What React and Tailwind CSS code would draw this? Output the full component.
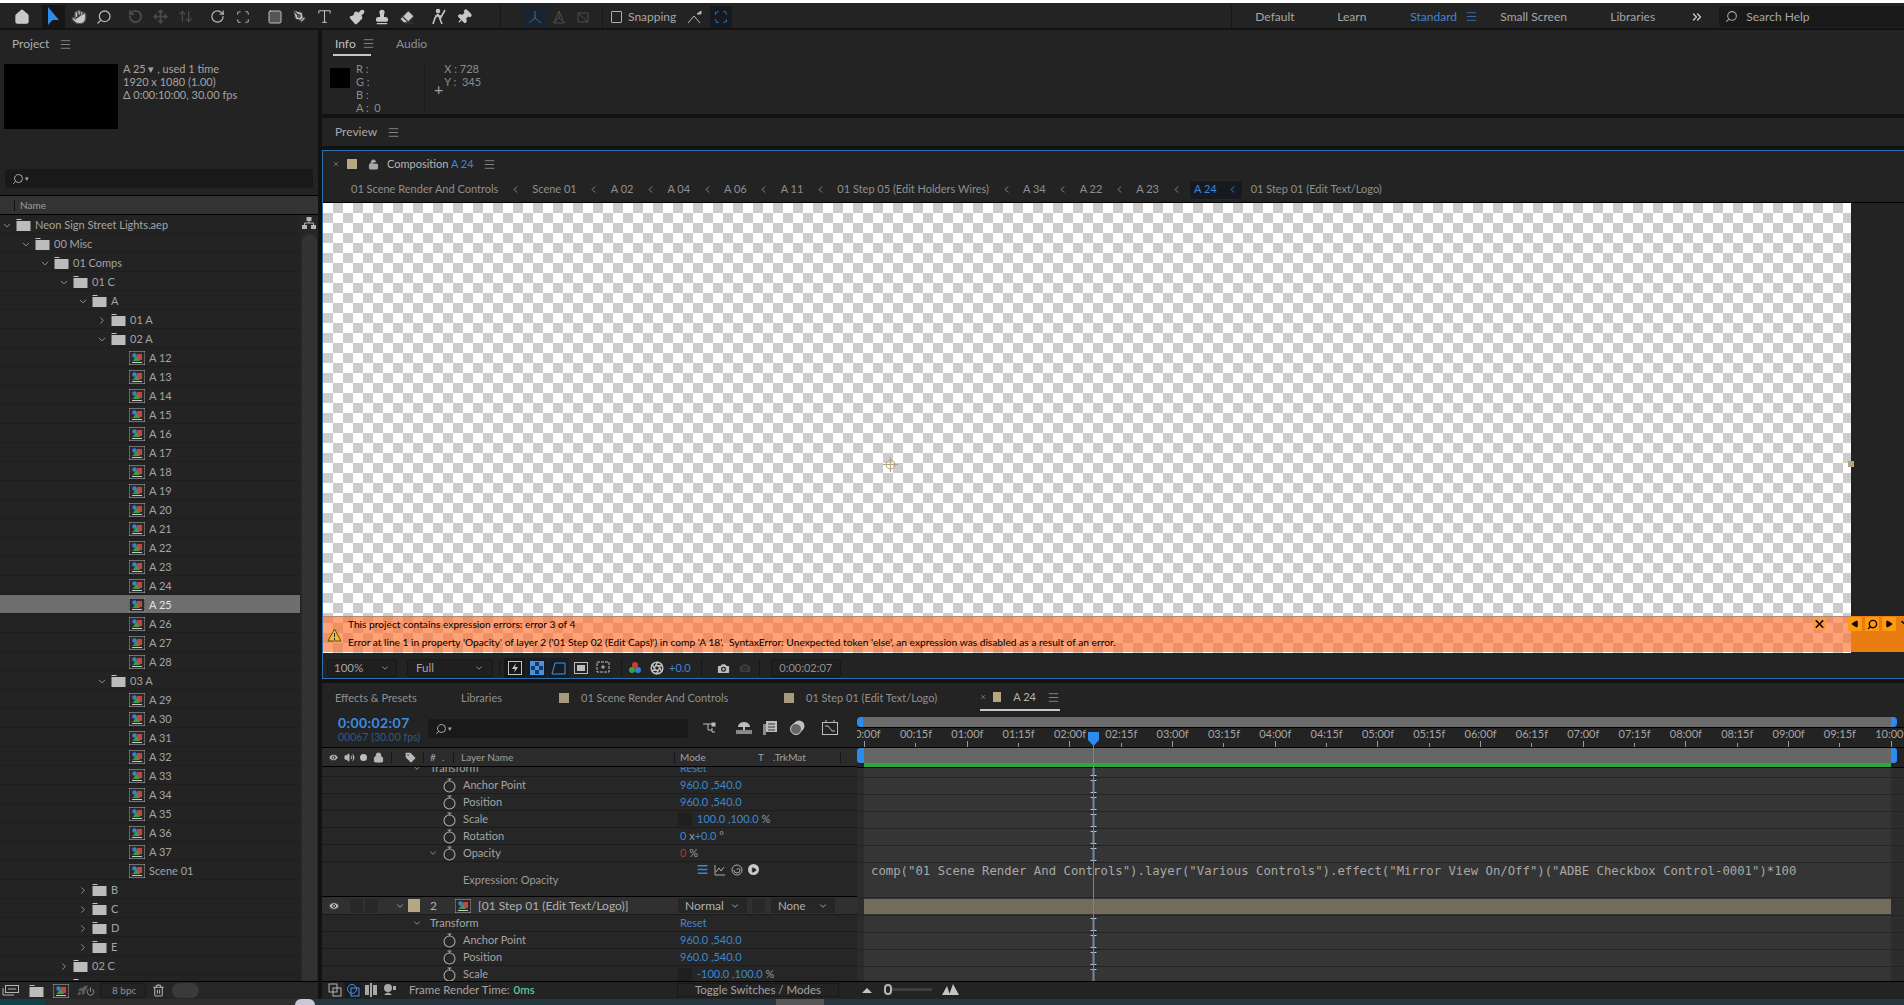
import React from 'react'
import {
  House, Hand, Search, RotateCcw, Scan, Square, PenTool, Type, Paintbrush, Stamp, Eraser, Pin, Move, ArrowUpDown, Rocket, Power,
  Menu, ChevronDown, ChevronRight, ChevronLeft, ChevronsRight, Camera, Aperture, Eye, Volume2, Lock, LockOpen, Tag, X, Play, Trash2,
} from 'lucide-react'

const Burger = ({ className = 'text-[#a8a8a8]' }) => <Menu size={13} strokeWidth={1.3} className={className} />

const Sep = ({ className = 'h-[20px]' }) => <div className={`w-px bg-[#161616] ${className}`} />

const Stopwatch = () => (
  <svg width="13" height="15" viewBox="0 0 13 15" fill="none" stroke="#a8a8a8" strokeWidth="1.1">
    <circle cx="6.5" cy="8.5" r="5.5" />
    <path d="M4.5 1h4M6.5 1v2" />
  </svg>
)

const FolderIcon = () => (
  <svg width="15" height="12" viewBox="0 0 15 12" className="shrink-0">
    <rect x="0.5" y="0" width="5" height="1" fill="#c4c4c4" />
    <rect x="0.5" y="2" width="14" height="10" fill="#bcbcbc" />
  </svg>
)

const CompIcon = () => (
  <svg width="16" height="14" viewBox="0 0 16 14" className="shrink-0">
    <rect x="0" y="0" width="16" height="14" fill="#2a2a2a" stroke="#b8b8b8" />
    <path d="M0.5 2h1M0.5 5h1M0.5 8h1M0.5 11h1M14.5 2h1M14.5 5h1M14.5 8h1M14.5 11h1" stroke="#222" />
    <rect x="3" y="11" width="10" height="1" fill="#c8c8c8" />
    <rect x="8" y="3" width="5" height="6" fill="#c9433a" />
    <path d="M3.5 10 7.5 5 11 10z" fill="#3c9b48" />
    <circle cx="5.5" cy="4.5" r="2.2" fill="#3f7fd0" />
  </svg>
)

const IBeam = () => (
  <svg width="7" height="13" viewBox="0 0 7 13" stroke="#a8c4e0" fill="none">
    <path d="M0.5 0.5h6M0.5 12.5h6" />
    <path d="M3.5 0.5v12" strokeWidth="1.6" />
  </svg>
)

const toolGroups = [
  [<House key="h" size={16} fill="#c8c8c8" stroke="#c8c8c8" />],
  [
    <div key="a" className="w-[23px] h-[23px] bg-[#161616] flex items-center justify-center">
      <svg width="13" height="19" viewBox="0 0 13 19"><path d="M1 0v18l4.5-5H12z" fill="#2d8ceb" /></svg>
    </div>,
    <Hand key="b" size={16} fill="#c8c8c8" stroke="#555" />,
    <Search key="c" size={16} stroke="#b0b0b0" className="-scale-x-100" />,
  ],
  [
    <RotateCcw key="a" size={15} stroke="#4a4a4a" strokeWidth={3} />,
    <Move key="b" size={15} stroke="#4a4a4a" strokeWidth={2.5} />,
    <ArrowUpDown key="c" size={15} stroke="#4a4a4a" strokeWidth={2} />,
  ],
  [
    <RotateCcw key="a" size={15} stroke="#b4b4b4" className="-scale-x-100" />,
    <Scan key="b" size={14} stroke="#b4b4b4" strokeDasharray="3 2" />,
  ],
  [
    <Square key="a" size={16} fill="#555" stroke="#c0c0c0" strokeWidth={1.5} />,
    <PenTool key="b" size={15} fill="#c0c0c0" stroke="#333" />,
    <Type key="c" size={17} stroke="#c0c0c0" strokeWidth={1.5} />,
  ],
  [
    <Paintbrush key="a" size={16} fill="#c8c8c8" stroke="#c8c8c8" />,
    <Stamp key="b" size={16} fill="#c8c8c8" stroke="#c8c8c8" />,
    <Eraser key="c" size={16} fill="#c8c8c8" stroke="#333" />,
  ],
  [
    <svg key="a" width="18" height="18" viewBox="0 0 18 18" stroke="#c0c0c0" strokeWidth="1.6" fill="none">
      <circle cx="8" cy="3" r="1.5" fill="#c0c0c0" /><path d="M8 6 5 10l-2 6M8 6l2 5 2 5M5 8h7M15 2l-5 9" />
    </svg>,
    <Pin key="b" size={16} fill="#c8c8c8" stroke="#c8c8c8" className="rotate-45" />,
  ],
]

const Toolbar = () => (
  <div className="h-[25px] bg-[#232323] flex items-center pl-[9px] pt-[2px] text-[#a6a6a6] shrink-0">
    {toolGroups.map((group, i) => (
      <div key={i} className="flex items-center mr-[7px]">
        {group.map((icon, j) => (
          <div key={j} className="w-[25px] flex justify-center items-center">{icon}</div>
        ))}
      </div>
    ))}
    <Sep className="h-[23px] ml-[17px]" />
    <div className="w-[24px] h-[22px] bg-[#1a2430] ml-[22px] flex items-center justify-center">
      <svg width="14" height="14" viewBox="0 0 14 14" stroke="#3a6ea0" fill="none"><path d="M7 1v7M7 8 1 13M7 8l6 5" /></svg>
    </div>
    <div className="w-[24px] flex justify-center">
      <svg width="14" height="14" viewBox="0 0 14 14" stroke="#4d4d4d" fill="none"><path d="M7 1v7M7 8 1 13M7 8l6 5M2 13h10L7 1z" /></svg>
    </div>
    <div className="w-[24px] flex justify-center">
      <svg width="14" height="14" viewBox="0 0 14 14" stroke="#4d4d4d" fill="none"><path d="M2 3h10v9H2zM2 3l10 9" /></svg>
    </div>
    <Sep className="h-[20px] ml-[7px]" />
    <div className="w-[11px] h-[12px] border border-[#b0b0b0] rounded-[1px] ml-[8px]" />
    <span className="ml-[6px] text-[12px]">Snapping</span>
    <div className="ml-[11px] w-[16px]">
      <svg width="16" height="14" viewBox="0 0 16 14" stroke="#b8b8b8" fill="none"><path d="M1 13 7 6l6 7" /><path d="M10 4l4-3v3z" fill="#b8b8b8" /></svg>
    </div>
    <div className="ml-[7px] w-[22px] h-[22px] bg-[#161a20] flex items-center justify-center">
      <Scan size={14} stroke="#3a82cc" strokeDasharray="3 3" />
    </div>
    <Sep className="h-[23px] ml-[499px]" />
    <span className="ml-[23px] w-[82px] text-[12px]">Default</span>
    <span className="w-[71px] text-[12px]">Learn</span>
    <span className="w-[51px] text-[12px] text-[#3f86d2] ml-[2px]">Standard</span>
    <span className="ml-[4px]"><Burger className="text-[#3f86d2]" /></span>
    <span className="ml-[22px] w-[110px] text-[12px]">Small Screen</span>
    <span className="w-[80px] text-[12px]">Libraries</span>
    <ChevronsRight size={14} strokeWidth={2.5} className="text-[#c8c8c8]" />
    <div className="ml-[15px] flex-1 h-[21px] bg-[#191919] rounded-l-[2px] flex items-center pl-[6px] text-[12px]">
      <Search size={13} className="-scale-x-100 mr-[8px]" />
      Search Help
    </div>
  </div>
)

const tree = [
  { d: 0, name: 'Neon Sign Street Lights.aep', t: 'open' },
  { d: 1, name: '00 Misc', t: 'open' },
  { d: 2, name: '01 Comps', t: 'open' },
  { d: 3, name: '01 C', t: 'open' },
  { d: 4, name: 'A', t: 'open' },
  { d: 5, name: '01 A', t: 'closed' },
  { d: 5, name: '02 A', t: 'open' },
  ...[12, 13, 14, 15, 16, 17, 18, 19, 20, 21, 22, 23, 24, 25, 26, 27, 28].map((n) => ({ d: 6, name: `A ${n}`, t: 'comp' })),
  { d: 5, name: '03 A', t: 'open' },
  ...[29, 30, 31, 32, 33, 34, 35, 36, 37].map((n) => ({ d: 6, name: `A ${n}`, t: 'comp' })),
  { d: 6, name: 'Scene 01', t: 'comp' },
  { d: 4, name: 'B', t: 'closed' },
  { d: 4, name: 'C', t: 'closed' },
  { d: 4, name: 'D', t: 'closed' },
  { d: 4, name: 'E', t: 'closed' },
  { d: 3, name: '02 C', t: 'closed' },
  { d: 3, name: '', t: 'closed' },
]

const indent = ['pl-[4px]', 'pl-[23px]', 'pl-[42px]', 'pl-[61px]', 'pl-[80px]', 'pl-[99px]', 'pl-[129px]']

const TreeRow = ({ row }) => {
  const selected = row.name === 'A 25'
  return (
    <div className={`h-[19px] shrink-0 flex items-center pt-[2px] border-b border-[#1e1e1e] ${indent[row.d]} ${selected ? 'bg-[#6e6e6e] text-[#e4e4e4]' : 'text-[#a4a4a4]'}`}>
      {row.t === 'comp' ? <CompIcon /> : (
        <>
          {row.t === 'open'
            ? <ChevronDown size={11} className="w-[12px] -ml-[3px] mr-[3px] text-[#9a9a9a]" />
            : <ChevronRight size={11} className="w-[12px] -ml-[3px] mr-[3px] text-[#9a9a9a]" />}
          <FolderIcon />
        </>
      )}
      <span className="ml-[4px] whitespace-nowrap">{row.name}</span>
    </div>
  )
}

const Project = () => (
  <div className="w-[318px] bg-[#232323] flex flex-col shrink-0">
    <div className="h-[28px] flex items-center pl-[12px] gap-[10px] text-[#b0b0b0] text-[12px] shrink-0">
      Project <Burger />
    </div>
    <div className="flex mt-[6px] h-[65px] shrink-0">
      <div className="ml-[4px] w-[114px] bg-black" />
      <div className="ml-[5px] -mt-[2px] text-[#a4a4a4] leading-[13px]">
        <div>A 25 ▾ , used 1 time</div>
        <div>1920 x 1080 (1.00)</div>
        <div>Δ 0:00:10:00, 30.00 fps</div>
      </div>
    </div>
    <div className="mt-[40px] mx-[5px] h-[19px] bg-[#191919] rounded-[2px] flex items-center pl-[7px] shrink-0 text-[#a8a8a8]">
      <Search size={12} className="-scale-x-100" /><span className="text-[7px] ml-[1px]">▾</span>
    </div>
    <div className="mt-[7px] h-[20px] bg-[#333333] border-y border-black flex items-center shrink-0 pl-[14px] text-[#9c9c9c] text-[10px]">
      <div className="w-px h-[11px] bg-[#111] mr-[5px]" />Name
    </div>
    <div className="flex-1 flex min-h-0">
      <div className="w-[300px] flex flex-col overflow-hidden">
        {tree.map((row, i) => <TreeRow key={i} row={row} />)}
      </div>
      <div className="flex-1 bg-[#262626] flex flex-col items-center pt-[2px]">
        <svg width="14" height="13" viewBox="0 0 14 13" fill="#b4b4b4"><rect x="4.5" y="0" width="5" height="4" /><rect x="0" y="8" width="5" height="4" /><rect x="9" y="8" width="5" height="4" /><path d="M7 4v2M2.5 8V6h9v2" stroke="#b4b4b4" fill="none" /></svg>
        <div className="mt-[4px] w-[15px] flex-1 bg-[#323232] rounded-t-[8px]" />
      </div>
    </div>
    <div className="h-[18px] bg-[#262626] border-t border-black flex items-center shrink-0 text-[#b0b0b0]">
      <div className="ml-[2px] w-[17px]">
        <svg width="17" height="11" viewBox="0 0 17 11" fill="none" stroke="#b4b4b4"><rect x="3.5" y="0.5" width="13" height="7" /><path d="M6 4h8M1 3v7h11" /></svg>
      </div>
      <div className="ml-[10px]"><FolderIcon /></div>
      <div className="ml-[9px]"><CompIcon /></div>
      <div className="ml-[8px] w-[18px] flex items-center">
        <Rocket size={11} fill="#5c5c5c" stroke="#5c5c5c" />
        <Power size={9} className="text-[#a8a8a8] -ml-[2px] mt-[2px]" />
      </div>
      <div className="ml-[5px] w-[46px] h-[15px] bg-[#232323] border border-[#1a1a1a] rounded-[2px] text-[10px] text-[#909090] flex items-center pl-[11px]">8 bpc</div>
      <Trash2 size={13} className="ml-[6px]" />
      <div className="ml-[7px] w-[27px] h-[15px] rounded-full bg-[#3a3a3a]" />
    </div>
  </div>
)

const InfoPanel = () => (
  <div className="h-[84px] bg-[#232323] shrink-0 flex flex-col">
    <div className="h-[27px] flex pl-[11px] text-[12px] shrink-0">
      <div className="w-[38px] pl-[2px] pt-[5px] flex items-start gap-[6px] border-b-2 border-[#c8c8c8] text-[#c0c0c0] h-[26px]">
        Info <span className="mt-[2px]"><Burger /></span>
      </div>
      <span className="ml-[25px] pt-[5px] text-[#909090]">Audio</span>
    </div>
    <div className="flex pl-[8px] text-[#8c8c8c] leading-[13px] pt-[5px]">
      <div className="w-[20px] h-[20px] bg-black mt-[6px]" />
      <div className="ml-[6px] w-[68px]">
        <div>R :</div><div>G :</div><div>B :</div><div>A : &nbsp;0</div>
      </div>
      <div className="w-px h-[48px] bg-[#1a1a1a]" />
      <div className="ml-[9px] text-[#a0a0a0] text-[16px] leading-none mt-[19px]">+</div>
      <div className="ml-[1px]">
        <div>X : 728</div><div>Y : &nbsp;345</div>
      </div>
    </div>
  </div>
)

const crumbs = ['01 Scene Render And Controls', 'Scene 01', 'A 02', 'A 04', 'A 06', 'A 11', '01 Step 05 (Edit Holders Wires)', 'A 34', 'A 22', 'A 23']

const Viewer = () => (
  <div className="relative flex h-[450px] shrink-0">
    <div className="w-[1528px] bg-[conic-gradient(#cccccc_25%,#ffffff_0_50%,#cccccc_0_75%,#ffffff_0)] bg-[length:20px_20px]" />
    <div className="flex-1 bg-[#232323]" />
    <svg width="15" height="15" viewBox="0 0 15 15" fill="none" stroke="#b5a27e" className="absolute left-[560px] top-[254px]">
      <circle cx="7.5" cy="7.5" r="4.5" /><path d="M7.5 0v15M0 7.5h15" />
    </svg>
    <div className="absolute left-[1525px] top-[258px] w-[6px] h-[6px] bg-[#b7a37f]" />
    <div className="absolute left-0 right-0 top-[413px] h-[36px] flex">
      <div className="w-[1528px] bg-[#ff7030]/65 flex items-center pl-[4px] pb-[4px] text-black text-[10.2px] border-t border-[#b08a72]">
        <svg width="15" height="14" viewBox="0 0 15 14" className="shrink-0 mt-[4px]"><path d="M7.5 1 14 13H1z" fill="#f0c030" stroke="#5a4a10" /><path d="M7.5 5v4M7.5 10v2" stroke="#222" /></svg>
        <div className="ml-[6px] leading-[18px]">
          <div>This project contains expression errors: error 3 of 4</div>
          <div className="whitespace-pre">Error at line 1 in property 'Opacity' of layer 2 ('01 Step 02 (Edit Caps)') in comp 'A 18'.  SyntaxError: Unexpected token 'else', an expression was disabled as a result of an error.</div>
        </div>
      </div>
      <div className="flex-1 bg-[#e87d12]" />
      <div className="absolute left-[1490px] top-[1px] w-[13px] h-[13px] flex items-center justify-center bg-[#ff9a40]">
        <X size={14} strokeWidth={3} className="text-black" />
      </div>
      <div className="absolute left-[1525px] top-[1px] flex gap-[3px]">
        <div className="w-[14px] h-[14px] bg-[#ff9a10] flex items-center justify-center"><Play size={8} fill="#000" stroke="#000" className="rotate-180" /></div>
        <div className="w-[14px] h-[14px] bg-[#ff9a10] flex items-center justify-center"><Search size={11} strokeWidth={3} className="text-black -scale-x-100" /></div>
        <div className="w-[14px] h-[14px] bg-[#ff9a10] flex items-center justify-center"><Play size={8} fill="#000" stroke="#000" /></div>
        <ChevronDown size={12} strokeWidth={3} className="text-black" />
      </div>
    </div>
  </div>
)

const CompToolbar = () => (
  <div className="h-[25px] shrink-0 bg-[#232323] flex items-center pl-[4px] pt-[5px] text-[#a4a4a4] text-[11.5px]">
    <div className="w-[70px] h-[18px] border border-[#191919] bg-[#1f1f1f] flex items-center justify-between px-[6px] rounded-[2px]">
      100% <ChevronDown size={10} />
    </div>
    <div className="ml-[10px] w-[86px] h-[18px] border border-[#191919] bg-[#1f1f1f] flex items-center justify-between px-[8px] rounded-[2px]">
      Full <ChevronDown size={10} />
    </div>
    <Sep className="h-[16px] ml-[6px]" />
    <div className="ml-[4px] w-[21px] h-[20px] bg-[#171717] flex items-center justify-center">
      <svg width="14" height="14" viewBox="0 0 14 14" fill="none" stroke="#c4c4c4"><rect x="0.5" y="0.5" width="13" height="13" /><path d="M8 2 4 8h3L6 12l4-6H7z" fill="#c4c4c4" stroke="none" /></svg>
    </div>
    <div className="ml-[1px] w-[21px] h-[20px] bg-[#171c24] flex items-center justify-center">
      <svg width="14" height="14" viewBox="0 0 14 14"><rect x="0.5" y="0.5" width="13" height="13" fill="#123a66" stroke="#4a92dc" /><path d="M1 1h4v4H1zM9 1h4v4H9zM5 5h4v4H5zM1 9h4v4H1zM9 9h4v4H9z" fill="#4a92dc" /></svg>
    </div>
    <div className="ml-[1px] w-[21px] h-[20px] bg-[#171c24] flex items-center justify-center">
      <svg width="15" height="14" viewBox="0 0 15 14" fill="none" stroke="#4a92dc"><path d="M1 13 4 2h10v11z" /></svg>
    </div>
    <div className="ml-[1px] w-[21px] flex justify-center">
      <svg width="14" height="12" viewBox="0 0 14 12"><rect x="0.5" y="0.5" width="13" height="11" fill="none" stroke="#bdbdbd" /><rect x="3" y="3" width="8" height="6" fill="#bdbdbd" /></svg>
    </div>
    <div className="ml-[1px] w-[21px] flex justify-center">
      <svg width="14" height="14" viewBox="0 0 14 14" fill="none" stroke="#bdbdbd"><rect x="1" y="1" width="12" height="10" strokeDasharray="3 1" /><path d="M7 4v4M5 6h4" /></svg>
    </div>
    <Sep className="h-[16px] ml-[8px]" />
    <svg width="14" height="14" viewBox="0 0 14 14" className="ml-[6px]"><circle cx="7" cy="4" r="3" fill="#d23a30" /><circle cx="4" cy="9" r="3" fill="#3aa04a" /><circle cx="10" cy="9" r="3" fill="#3a7fd0" /></svg>
    <Aperture size={14} stroke="#c0c0c0" strokeWidth={2.5} className="ml-[8px]" />
    <span className="ml-[5px] text-[#3f86d2] text-[11px]">+0.0</span>
    <Sep className="h-[16px] ml-[10px]" />
    <Camera size={15} fill="#bdbdbd" stroke="#232323" className="ml-[14px]" />
    <Camera size={14} fill="#3c3c3c" stroke="#232323" className="ml-[7px]" />
    <Sep className="h-[16px] ml-[7px]" />
    <div className="ml-[11px] w-[70px] h-[18px] bg-[#1f1f1f] border border-[#191919] rounded-[2px] flex items-center justify-center text-[#8f8f8f] text-[11px]">0:00:02:07</div>
  </div>
)

const CompPanel = () => (
  <div className="h-[529px] shrink-0 bg-[#232323] border border-[#2f6fae] border-r-0 flex flex-col">
    <div className="h-[26px] shrink-0 flex items-center pl-[9px] text-[#a8a8a8] text-[11px]">
      <X size={8} className="text-[#8c8c8c]" />
      <div className="ml-[7px] w-[10px] h-[10px] bg-[#b5a684]" />
      <LockOpen size={11} fill="#a8a8a8" className="ml-[11px]" />
      <span className="ml-[8px] text-[#b4b4b4]">Composition <span className="text-[#3f86d2]">A 24</span></span>
      <span className="ml-[9px]"><Burger /></span>
    </div>
    <div className="h-[26px] shrink-0 border-b border-black flex items-center pl-[28px] text-[#8f8f8f] text-[11px] whitespace-nowrap">
      {crumbs.map((c) => (
        <React.Fragment key={c}>
          <span>{c}</span>
          <ChevronLeft size={11} className="mx-[11.5px]" />
        </React.Fragment>
      ))}
      <div className="-ml-[4px] h-[20px] flex items-center bg-[#161a20] border border-[#262626] pl-[4px] pr-[4px] rounded-[2px] text-[#3f86d2]">
        A 24 <ChevronLeft size={11} className="ml-[10px]" />
      </div>
      <span className="ml-[8px]">01 Step 01 (Edit Text/Logo)</span>
    </div>
    <Viewer />
    <CompToolbar />
  </div>
)

const Tabs = () => (
  <div className="h-[28px] shrink-0 flex items-center pl-[13px] pt-[2px] text-[#909090] text-[11px] whitespace-nowrap">
    <span className="w-[126px]">Effects &amp; Presets</span>
    <span className="w-[98px]">Libraries</span>
    <div className="w-[10px] h-[10px] bg-[#a79a7f]" />
    <span className="ml-[12px] w-[203px]">01 Scene Render And Controls</span>
    <div className="w-[10px] h-[10px] bg-[#a79a7f]" />
    <span className="ml-[12px] w-[174px]">01 Step 01 (Edit Text/Logo)</span>
    <div className="w-[80px] h-[26px] border-b-2 border-[#c8c8c8] flex items-center text-[#b4b4b4]">
      <X size={8} />
      <div className="ml-[7px] w-[10px] h-[10px] bg-[#b5a684]" />
      <span className="ml-[12px]">A 24</span>
      <span className="ml-[11px]"><Burger /></span>
    </div>
  </div>
)

const Prop = ({ label, children, chevron }) => (
  <div className="h-[17px] shrink-0 flex items-center border-b border-[#1c1c1c] pl-[104px]">
    <div className="w-[12px] shrink-0 pl-[2px]">{chevron && <ChevronDown size={10} className="text-[#a0a0a0]" />}</div>
    <div className="w-[22px] shrink-0 flex justify-center"><Stopwatch /></div>
    <span className="ml-[3px] text-[#a4a4a4]">{label}</span>
    <div className="absolute left-[358px] text-[#3f86d2] whitespace-nowrap">{children}</div>
  </div>
)

const Gray = ({ children }) => <span className="text-[#9a9a9a]">{children}</span>

const LayerRows = () => (
  <div className="-mt-[7px] relative">
    <div className="h-[17px] flex items-center border-b border-[#1c1c1c] pl-[90px] text-[#a4a4a4]">
      <ChevronDown size={10} className="mr-[8px]" />Transform
      <span className="absolute left-[358px] text-[#3f86d2]">Reset</span>
    </div>
    <Prop label="Anchor Point">960.0 ,540.0</Prop>
    <Prop label="Position">960.0 ,540.0</Prop>
    <Prop label="Scale">
      <span className="inline-block w-[14px] h-[13px] bg-[#1f1f1f] align-middle -ml-[2px] mr-[5px]" />100.0 ,100.0 <Gray>%</Gray>
    </Prop>
    <Prop label="Rotation">0 <Gray>x</Gray>+0.0 <Gray>°</Gray></Prop>
    <Prop label="Opacity" chevron><span className="text-[#b03a34]">0</span> <Gray>%</Gray></Prop>
    <div className="h-[35px] border-b border-black flex items-center pl-[141px] pt-[2px] text-[#9a9a9a] relative">
      Expression: Opacity
      <div className="absolute left-[374px] top-[0px] flex items-center h-[15px]">
        <Menu size={13} strokeWidth={3} className="text-[#3f86d2]" />
        <svg width="12" height="12" viewBox="0 0 12 12" fill="none" stroke="#aaa" className="ml-[5px]"><path d="M1 1v10h10M2 8l3-4 2 3 3-4" /></svg>
        <svg width="12" height="12" viewBox="0 0 12 12" fill="none" stroke="#aaa" className="ml-[5px]"><circle cx="6" cy="6" r="5" /><path d="M6 6a1.5 1.5 0 0 1 3 0 3 3 0 0 1-6 0" /></svg>
        <div className="ml-[5px] w-[11px] h-[11px] rounded-full bg-[#c8c8c8] flex items-center justify-center"><Play size={6} fill="#222" stroke="#222" /></div>
      </div>
    </div>
    <div className="h-[18px] bg-[#303030] border-b border-[#1c1c1c] flex items-center pl-[6px] text-[#b0b0b0] relative text-[12px]">
      <Eye size={12} fill="#b8b8b8" stroke="#303030" />
      <div className="ml-[10px] w-[13px] h-[14px] bg-[#282828]" />
      <div className="ml-[2px] w-[13px] h-[14px] bg-[#282828]" />
      <ChevronDown size={10} className="ml-[17px]" />
      <div className="ml-[3px] w-[12px] h-[13px] bg-[#b5a684]" />
      <span className="ml-[10px] w-[25px]">2</span>
      <CompIcon />
      <span className="ml-[7px] whitespace-nowrap">[01 Step 01 (Edit Text/Logo)]</span>
      <div className="absolute left-[356px] w-[69px] h-[15px] bg-[#262626] flex items-center justify-between px-[7px]">Normal <ChevronDown size={10} /></div>
      <div className="absolute left-[430px] w-[13px] h-[14px] bg-[#282828]" />
      <div className="absolute left-[449px] w-[64px] h-[15px] bg-[#262626] flex items-center justify-between px-[7px] text-[11.5px]">None <ChevronDown size={10} /></div>
    </div>
    <div className="h-[17px] flex items-center border-b border-[#1c1c1c] pl-[90px] text-[#a4a4a4] relative">
      <ChevronDown size={10} className="mr-[8px]" />Transform
      <span className="absolute left-[358px] text-[#3f86d2]">Reset</span>
    </div>
    <Prop label="Anchor Point">960.0 ,540.0</Prop>
    <Prop label="Position">960.0 ,540.0</Prop>
    <Prop label="Scale">
      <span className="inline-block w-[14px] h-[13px] bg-[#1f1f1f] align-middle -ml-[2px] mr-[5px]" />-100.0 ,100.0 <Gray>%</Gray>
    </Prop>
  </div>
)

const LayerPanel = () => (
  <div className="w-[535px] shrink-0 flex flex-col min-h-0">
    <div className="h-[36px] shrink-0 flex items-start">
      <div className="ml-[16px] w-[90px] pt-[5px] leading-none">
        <div className="text-[#3b8be0] font-bold text-[14px] tracking-[0.4px]">0:00:02:07</div>
        <div className="text-[#2d5a8c] text-[10.5px] mt-[2px] whitespace-nowrap">00067 (30.00 fps)</div>
      </div>
      <div className="mt-[8px] w-[260px] h-[19px] bg-[#191919] rounded-[2px] flex items-center pl-[7px] text-[#a8a8a8]">
        <Search size={12} className="-scale-x-100" /><span className="text-[7px] ml-[1px]">▾</span>
      </div>
      <div className="ml-[15px] mt-[9px] flex items-center text-[#b4b4b4]">
        <svg width="15" height="14" viewBox="0 0 15 14" fill="none" stroke="#bdbdbd"><path d="M0 3h9M5 3v6h4M9 7v4h3" /><rect x="9" y="2" width="3" height="3" fill="#bdbdbd" /></svg>
        <svg width="16" height="13" viewBox="0 0 16 13" className="ml-[18px]"><path d="M2 6a6 5 0 0 1 12 0z" fill="#bdbdbd" /><rect x="7" y="6" width="2" height="3" fill="#bdbdbd" /><rect x="0" y="9" width="16" height="4" fill="#888" /></svg>
        <svg width="14" height="14" viewBox="0 0 14 14" fill="#bdbdbd" className="ml-[11px]"><rect x="3" y="0" width="11" height="11" /><rect x="0" y="3" width="3" height="11" fill="#8a8a8a" /><path d="M5 3h7M5 6h7M5 9h7" stroke="#333" /></svg>
        <svg width="15" height="15" viewBox="0 0 15 15" className="ml-[13px]"><circle cx="9" cy="6" r="5.5" fill="#c0c0c0" /><circle cx="6" cy="9" r="5.5" fill="#666" stroke="#ccc" /></svg>
        <svg width="16" height="15" viewBox="0 0 16 15" fill="none" stroke="#bdbdbd" className="ml-[17px]"><rect x="0.5" y="2.5" width="15" height="12" /><path d="M3 6h3l4 5h3M4 0v3M12 0v3" /></svg>
      </div>
    </div>
    <div className="h-[20px] shrink-0 border-y border-black bg-[#2b2b2b] flex items-center text-[#a0a0a0] text-[10px] relative">
      <Eye size={11} fill="#b8b8b8" stroke="#2b2b2b" className="ml-[6px]" />
      <Volume2 size={11} fill="#b8b8b8" stroke="#b8b8b8" className="ml-[5px]" />
      <div className="ml-[5px] w-[7px] h-[7px] rounded-full bg-[#bdbdbd]" />
      <Lock size={11} fill="#b8b8b8" stroke="#b8b8b8" className="ml-[6px]" />
      <Sep className="h-[11px] ml-[7px]" />
      <Tag size={13} fill="#b8b8b8" stroke="#2b2b2b" className="ml-[12px]" />
      <Sep className="h-[11px] ml-[6px]" />
      <span className="ml-[6px] w-[12px]">#</span>
      <span className="w-[11px]">.</span>
      <Sep className="h-[11px]" />
      <span className="ml-[7px]">Layer Name</span>
      <div className="absolute left-[352px] w-px h-[11px] bg-[#161616]" />
      <span className="absolute left-[358px]">Mode</span>
      <span className="absolute left-[436px]">T</span>
      <span className="absolute left-[451px]">.TrkMat</span>
      <div className="absolute left-[518px] w-px h-[11px] bg-[#161616]" />
    </div>
    <div className="flex-1 min-h-0 overflow-hidden bg-[#262626]">
      <LayerRows />
    </div>
  </div>
)

const ticks = ['00:00f', '00:15f', '01:00f', '01:15f', '02:00f', '02:15f', '03:00f', '03:15f', '04:00f', '04:15f', '05:00f', '05:15f', '06:00f', '06:15f', '07:00f', '07:15f', '08:00f', '08:15f', '09:00f', '09:15f', '10:00f']

const trackRows = [
  { h: 'h-[17px]', beam: true },
  { h: 'h-[17px]', beam: true },
  { h: 'h-[17px]', beam: true },
  { h: 'h-[17px]', beam: true },
  { h: 'h-[17px]', beam: true },
  { h: 'h-[17px]', beam: true },
  { h: 'h-[35px]', code: true },
  { h: 'h-[18px]', bar: true },
  { h: 'h-[17px]', beam: true },
  { h: 'h-[17px]', beam: true },
  { h: 'h-[17px]', beam: true },
  { h: 'h-[17px]', beam: true },
]

const Track = ({ row }) => (
  <div className={`${row.h} shrink-0 flex border-b border-[#242424]`}>
    <div className="w-[7px] bg-[#2c2c2c]" />
    <div className="w-[1027px] bg-[#353535] relative">
      {row.beam && <div className="absolute left-[226px] top-[2px]"><IBeam /></div>}
      {row.bar && <div className="absolute inset-x-0 top-[1px] h-[15px] bg-[#736b5c]" />}
      {row.code && (
        <div className="absolute left-[7px] -top-[1px] text-[#a8a8a8] font-['DejaVu_Sans_Mono',monospace] text-[12.3px] whitespace-nowrap">
          comp("01 Scene Render And Controls").layer("Various Controls").effect("Mirror View On/Off")("ADBE Checkbox Control-0001")*100
        </div>
      )}
    </div>
    <div className="flex-1 bg-[#2c2c2c]" />
  </div>
)

const Timeline = () => (
  <div className="flex-1 min-w-0 flex flex-col relative overflow-hidden">
    <div className="h-[6px] shrink-0" />
    <div className="h-[10px] shrink-0 flex">
      <div className="w-[6px] bg-[#2d8ceb] rounded-l-[4px]" />
      <div className="w-[1028px] bg-[#6b6b6b]" />
      <div className="w-[6px] bg-[#2d8ceb] rounded-r-[4px]" />
    </div>
    <div className="h-[21px] shrink-0 border-y border-black flex -ml-[18px] text-[#a6a6a6] text-[11px] overflow-hidden">
      {ticks.map((t, i) => (
        <div key={t} className="w-[51.33px] shrink-0 flex flex-col items-center justify-between">
          <span className="leading-[12px] whitespace-nowrap">{t}</span>
          <div className={`w-px bg-[#9c9c9c] ${i % 2 ? 'h-[4px]' : 'h-[6px]'}`} />
        </div>
      ))}
    </div>
    <div className="h-[20px] shrink-0 border-b border-black flex flex-col">
      <div className="h-[15px] flex">
        <div className="w-[7px] bg-[#2d8ceb] rounded-l-[3px]" />
        <div className="w-[1027px] bg-[#666666]" />
        <div className="w-[6px] bg-[#2d8ceb] rounded-r-[3px]" />
      </div>
      <div className="h-[4px] ml-[7px] w-[1027px] bg-[#2aa83c]" />
    </div>
    <div className="flex-1 min-h-0 overflow-hidden">
      <div className="-mt-[7px]">
        {trackRows.map((row, i) => <Track key={i} row={row} />)}
      </div>
    </div>
    <div className="absolute left-[236px] top-[21px] bottom-0 w-px bg-[#4a8fd4]" />
    <svg width="11" height="14" viewBox="0 0 11 14" className="absolute left-[231px] top-[21px]"><path d="M0 0h11v8l-5.5 6L0 8z" fill="#2d8ceb" /></svg>
  </div>
)

const LowerPanel = () => (
  <div className="flex-1 min-h-0 bg-[#232323] flex flex-col">
    <Tabs />
    <div className="flex-1 min-h-0 flex">
      <LayerPanel />
      <Timeline />
    </div>
    <div className="h-[18px] shrink-0 border-t border-black flex items-center pb-[2px] text-[#a4a4a4] relative text-[11.5px]">
      <svg width="14" height="14" viewBox="0 0 14 14" fill="none" stroke="#b4b4b4" className="ml-[6px]"><rect x="1" y="1" width="8" height="8" /><rect x="5" y="5" width="8" height="8" /></svg>
      <div className="ml-[3px] w-[16px] h-[16px] bg-[#171c24] flex items-center justify-center">
        <svg width="14" height="14" viewBox="0 0 14 14" fill="none" stroke="#4a92dc"><circle cx="6" cy="6" r="4.5" /><rect x="5" y="5" width="8" height="8" /></svg>
      </div>
      <svg width="14" height="14" viewBox="0 0 14 14" fill="#a8a8a8" className="ml-[3px]"><rect x="1" y="2" width="4" height="10" /><rect x="9" y="2" width="4" height="10" /><rect x="6" y="0" width="2" height="14" /></svg>
      <svg width="14" height="14" viewBox="0 0 14 14" fill="#a8a8a8" className="ml-[5px]"><circle cx="5" cy="5" r="4" /><path d="M1 12q4-5 8 0zM10 3h3v4h-3z" /></svg>
      <span className="ml-[12px]">Frame Render Time:</span>
      <span className="ml-[4px] text-[#58c39f] font-semibold">0ms</span>
      <div className="absolute left-[355px] w-[162px] h-[14px] border border-[#181818] flex items-center justify-center">Toggle Switches / Modes</div>
      <div className="absolute left-[540px] flex items-center">
        <svg width="10" height="6" viewBox="0 0 10 6" fill="#c4c4c4"><path d="M0 6 5 1l5 5z" /></svg>
        <div className="ml-[12px] w-[8px] h-[11px] rounded-full border-2 border-[#b4b4b4]" />
        <div className="w-[40px] h-[3px] bg-[#3e3e3e]" />
        <svg width="17" height="11" viewBox="0 0 17 11" fill="#c4c4c4" className="ml-[10px]"><path d="M0 11 5 2l3 9zM7 11l4-11 6 11z" /></svg>
      </div>
    </div>
  </div>
)

export default function App() {
  return (
    <div className="w-[1904px] h-[1005px] overflow-hidden bg-[#121212] flex flex-col font-['Lato','Noto_Sans',sans-serif] text-[11px]">
      <div className="h-[3px] bg-white shrink-0" />
      <Toolbar />
      <div className="h-[2px] shrink-0" />
      <div className="flex-1 min-h-0 flex">
        <Project />
        <div className="w-[4px] shrink-0" />
        <div className="flex-1 min-w-0 flex flex-col gap-[4px]">
          <InfoPanel />
          <div className="h-[28px] shrink-0 bg-[#232323] flex items-center pl-[13px] gap-[10px] text-[#a8a8a8] text-[12px]">
            Preview <Burger />
          </div>
          <CompPanel />
          <LowerPanel />
        </div>
      </div>
      <div className="h-[6px] shrink-0 flex bg-[#243640]">
        <div className="w-[45px] bg-[#123f49]" />
        <div className="w-[250px] bg-[#2e2e2e]" />
        <div className="w-[20px] bg-[#c8c8d8] rounded-t-full" />
        <div className="ml-[461px] w-[48px] bg-[#555]" />
      </div>
    </div>
  )
}
